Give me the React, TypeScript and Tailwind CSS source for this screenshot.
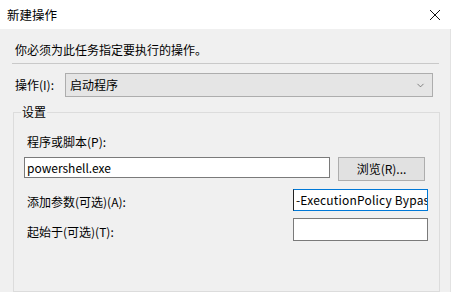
import { ChevronDown } from "lucide-react"

const font = "font-['Noto_Sans_CJK_SC','Noto_Sans',sans-serif]"

export default function App() {
	return (
		<div className={`w-[455px] h-[292px] overflow-hidden bg-white text-[12px] leading-[16px] text-black ${font}`}>
			{/* title bar */}
			<div className="h-[29px] flex items-center justify-between pl-[7px] pr-[14px] bg-white">
				<span className="text-[12.5px]">新建操作</span>
				<svg width="12" height="12" viewBox="0 0 12 12">
					<path d="M1 1 L11 11 M11 1 L1 11" stroke="#111" strokeWidth="1" fill="none" />
				</svg>
			</div>

			<div className="w-[451px] h-[263px] bg-[#f0f0f0] border-r border-[#e2e2e2] flex flex-col">
				<div className="pt-[13px] pl-[15px]">你必须为此任务指定要执行的操作。</div>
				<div className="mt-[5px] ml-[12px] w-[427px] border-t border-[#c9c9c9]" />

				<div className="mt-[9px] flex items-center">
					<span className="ml-[15px] w-[50px]">操作(I):</span>
					<div className="w-[368px] h-[24px] bg-[#e5e5e5] border border-[#adadad] flex items-center justify-between pl-[4px] pr-[6px]">
						<span>启动程序</span>
						<ChevronDown className="w-[11px] h-[11px] text-[#555]" strokeWidth={1.5} />
					</div>
				</div>

				<fieldset className="mt-[7px] ml-[13px] w-[427px] h-[200px] border border-[#dcdcdc] px-[10px]">
					<legend className="-ml-[3px] px-[1px] leading-[16px]">设置</legend>

					<div className="mt-[14px] pl-[3px]">程序或脚本(P):</div>
					<div className="mt-[7px] flex items-start gap-[8px]">
						<div className="w-[306px] h-[21px] bg-white border border-[#7a7a7a] flex items-center pl-[2px]">
							powershell.exe
						</div>
						<div className="w-[87px] h-[24px] bg-[#e1e1e1] border border-[#adadad] flex items-center justify-center">
							浏览(R)...
						</div>
					</div>

					<div className="mt-[8px] flex items-center justify-between">
						<span className="pl-[3px] pt-[3px]">添加参数(可选)(A):</span>
						<div className="w-[135px] h-[22px] bg-white border border-[#0078d7] border-l-[#222] overflow-hidden whitespace-nowrap flex items-center pl-[2px] mr-[1px] tracking-[0.2px]">
							-ExecutionPolicy Bypass
						</div>
					</div>

					<div className="mt-[7px] flex items-center justify-between">
						<span className="pl-[3px] pt-[4px]">起始于(可选)(T):</span>
						<div className="w-[135px] h-[23px] bg-white border border-[#7a7a7a] mr-[1px]" />
					</div>
				</fieldset>
			</div>
		</div>
	)
}
